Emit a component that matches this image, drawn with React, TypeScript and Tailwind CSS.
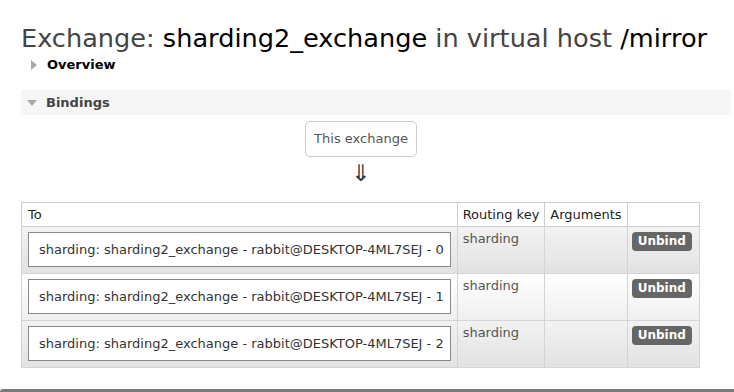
import React from "react";

const rows = [0, 1, 2];

export default function App() {
  return (
    <div className="relative w-[734px] h-[392px] overflow-hidden bg-white font-['DejaVu_Sans',sans-serif] text-[13px] text-[#484848]">
      <div className="pl-[21px] pr-[3px]">
        <h1 className="mt-[25px] text-[25.6px] leading-[26px] text-[#444] whitespace-nowrap">
          Exchange: <span className="text-black">sharding2_exchange</span> in virtual host{" "}
          <span className="text-black">/mirror</span>
        </h1>
        <div className="mt-[6px] flex h-[16px] items-center pl-[10px]">
          <span className="mr-[10px] inline-block h-0 w-0 border-y-[5px] border-l-[6px] border-y-transparent border-l-[#aaa]" />
          <span className="font-bold text-black">Overview</span>
        </div>
        <div className="mt-[17px] flex h-[25px] items-center bg-[#f6f6f6] pl-[6px] pt-[1px]">
          <span className="mr-[9px] inline-block h-0 w-0 border-x-[5px] border-t-[6px] border-x-transparent border-t-[#aaa]" />
          <span className="font-bold text-[#444]">Bindings</span>
        </div>
        <div className="mt-[6px] flex flex-col items-center pr-[30px]">
          <div className="flex h-[36px] w-[112px] items-center justify-center rounded-[5px] border border-[#ccc] text-[#555]">
            This exchange
          </div>
          <div className="mt-[5px] text-[23px] leading-[22px] text-[#333]">⇓</div>
        </div>
        <table className="mt-[18px] w-[679px] border-collapse border border-[#ccc]">
          <thead>
            <tr className="h-[24px] bg-white text-left text-[#222]">
              <th className="w-[437px] border border-[#ccc] px-[6px] pt-[1px] font-normal">To</th>
              <th className="w-[87px] border border-[#ccc] px-[5px] pt-[1px] font-normal whitespace-nowrap">Routing key</th>
              <th className="w-[80px] border border-[#ccc] px-[5px] pt-[1px] font-normal">Arguments</th>
              <th className="w-[74px] border border-[#ccc] font-normal"></th>
            </tr>
          </thead>
          <tbody>
            {rows.map((i) => (
              <tr
                key={i}
                className={
                  i % 2 === 0
                    ? "h-[46px] bg-gradient-to-b from-[#f2f2f2] to-[#e2e2e2]"
                    : "h-[46px] bg-gradient-to-b from-[#ffffff] to-[#efefef]"
                }
              >
                <td className="border border-[#d4d4d4] px-[6px] pt-[5px] pb-[6px] align-top">
                  <div className="flex h-[35px] items-center border border-[#888] bg-white pl-[10px] text-[#333] whitespace-nowrap">
                    sharding: sharding2_exchange - rabbit@DESKTOP-4ML7SEJ - {i}
                  </div>
                </td>
                <td className="border border-[#d4d4d4] px-[5px] pt-[2px] align-top text-[#555]">sharding</td>
                <td className="border border-[#d4d4d4] align-top"></td>
                <td className="border border-[#d4d4d4] pl-[4px] pt-[4px] align-top">
                  <button className="h-[19px] rounded-[4px] bg-[#666] px-[6px] text-[12px] font-bold leading-[19px] text-white">
                    Unbind
                  </button>
                </td>
              </tr>
            ))}
          </tbody>
        </table>
      </div>
      <div className="absolute bottom-0 left-0 h-[3px] w-full rounded-tl-[3px] bg-[#7a7a7a]" />
    </div>
  );
}
